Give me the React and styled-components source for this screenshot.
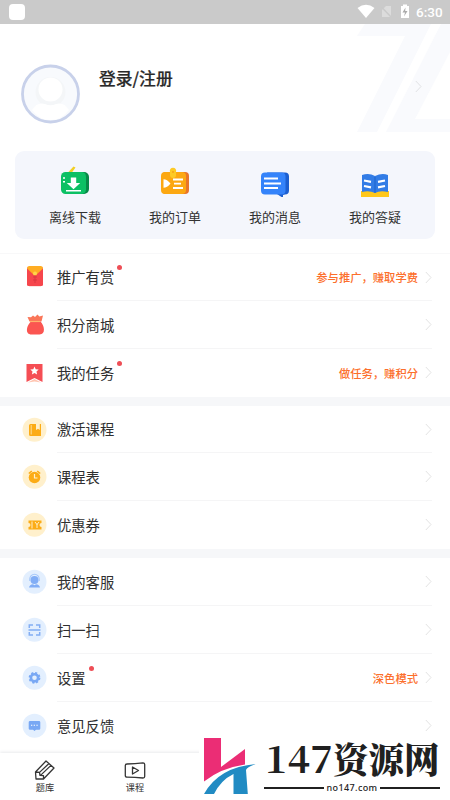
import React from "react";
import styled, { createGlobalStyle } from "styled-components";

const Global = createGlobalStyle`
  * { box-sizing: border-box; }
  body { margin: 0; background: #fff; font-family: "Noto Sans CJK SC", sans-serif; color: #333; }
`;
const Screen = styled.div`
  position: relative; width: 450px; height: 800px; overflow: hidden;
  display: flex; flex-direction: column; background: #fff;
`;
const StatusBar = styled.header`
  height: 24px; flex: none; background: #cacaca; display: flex; align-items: center;
  justify-content: space-between; padding: 0 7px 0 9px;
`;
const AppBadge = styled.div`width: 16px; height: 16px; border-radius: 4px; background: #fff;`;
const StatusIcons = styled.div`display: flex; align-items: center;`;
const Clock = styled.span`
  font: 500 13.5px/24px Roboto, sans-serif; color: #fff; margin-left: 7px; width: 27px; white-space: nowrap;
`;
const Profile = styled.section`
  position: relative; height: 127px; flex: none; display: flex; padding: 40px 21px 0;
`;
const Emblem = styled.svg`position: absolute; right: 0; top: 0;`;
const Avatar = styled.svg`flex: none;`;
const Login = styled.h1`
  margin: 1px 0 0 19px; font-size: 16.8px; line-height: 26px; font-weight: 500; color: #2a2a2a; flex: 1;
  -webkit-text-stroke: .2px #2a2a2a;
`;
const ProfileArrow = styled.div`position: relative; margin: 16px 7px 0 0; line-height: 0;`;
const Card = styled.section`
  height: 88px; flex: none; margin: 0 15px 14px; padding: 0 10px; background: #f4f6fc; border-radius: 9px;
  display: grid; grid-template-columns: repeat(4, 100px);
`;
const Shortcut = styled.div`
  display: flex; flex-direction: column; align-items: center; padding-top: 14px;
  font-size: 13px; line-height: 20px; color: #333;
  svg { margin-bottom: 10px; }
`;
const Group = styled.section`
  flex: none; border-bottom: ${(p) => (p.$last ? "none" : "9px solid #f6f7f9")};
  border-top: ${(p) => (p.$first ? "1px solid #f8f8f9" : "none")};
`;
const Row = styled.div`
  height: ${(p) => (p.$short ? 47 : 48)}px; display: flex; align-items: center; padding-left: 22px;
`;
const IconSlot = styled.div`width: 35px; height: 26px; flex: none;`;
const RowBody = styled.div`
  height: 100%; flex: 1; margin-right: 18px; display: flex; align-items: center;
  border-bottom: 1px solid ${(p) => (p.$line ? "#f5f5f6" : "transparent")};
`;
const Label = styled.span`
  position: relative; font-size: 14.3px; line-height: 22px; color: #2f2f2f;
`;
const Dot = styled.i`
  position: absolute; left: calc(100% + 3px); top: -1px; width: 5px; height: 5px; border-radius: 50%; background: #ee4e56;
`;
const Hint = styled.span`
  margin-left: auto; font-size: 11.3px; line-height: 18px; font-weight: 500; color: #fc6f2c;
`;
const ArrowSlot = styled.span`
  display: flex; margin-left: ${(p) => (p.$after ? "7px" : "auto")};
`;
const TabBar = styled.nav`
  position: absolute; left: 0; right: 0; bottom: 0; height: 47px; background: #fff;
  box-shadow: 0 -1px 3px #e9eaec; display: grid; grid-template-columns: repeat(5, 90px);
`;
const Tab = styled.div`
  display: flex; flex-direction: column; align-items: center; padding-top: 7px;
  font-size: 9.2px; line-height: 12px; color: #333;
  svg { margin-bottom: 1px; }
`;
const Watermark = styled.aside`
  position: absolute; left: 199px; bottom: 0; width: 251px; height: 67px; background: #fff;
  display: flex; padding: 4px 0 0 5px;
`;
const Brand = styled.div`margin-left: 8px; width: 176px;`;
const BrandName = styled.div`
  height: 46px; display: flex; align-items: flex-start; color: #202020; white-space: nowrap;
`;
const Digits = styled.span`
  font: 700 38px/40px "Noto Serif CJK SC", "Liberation Serif", serif; letter-spacing: .3px; width: 68px; margin-left: 1px;
`;
const Hanzi = styled.span`
  font: 900 35.5px/42px "Noto Serif CJK SC", "Noto Sans CJK SC", serif;
`;
const Domain = styled.div`
  display: flex; align-items: center; gap: 2px; color: #222; font: 500 9px/10px "Noto Sans", sans-serif;
  letter-spacing: .4px;
  &::before, &::after { content: ""; height: 2px; background: #202020; flex: 1; }
`;

const Chevron = ({ color = "#e2e2e2" }) => (
  <svg width="7" height="13" viewBox="0 0 7 13" fill="none" stroke={color} strokeWidth="1"><path d="M.8 1 6 6.5.8 12" /></svg>
);

const CardIcon = ({ name }) => (
  <svg width="32" height="32" viewBox="0 0 32 32">
    {name === "download" && <>
      <path d="m8.500 8 6-6.500 2 1-4 5.500Z" fill="#f2cf24" />
      <rect x="5" y="7" width="25" height="22" rx="5" fill="#078947" />
      <rect x="2" y="7" width="25" height="22" rx="4.5" fill="#0cc064" />
      <path d="M11.800 12.500h5.400V18h4L14.500 24.200 7.800 18h4Z" fill="#fff" />
      <path d="M7 25.700h15M4 13h2M4 16.800h2" stroke="#fff" strokeWidth="1.500" />
    </>}
    {name === "order" && <>
      <rect x="3" y="7" width="27" height="22" rx="4" fill="#e97528" />
      <rect x="2" y="7" width="25" height="22" rx="4" fill="#fca812" />
      <path d="M11 7a3.200 3.200 0 1 1 6 0v3a3 3 0 0 1-6 0Z" fill="#fdca25" /><circle cx="14" cy="7" r="1" fill="#f6a416" />
      <path d="M4.500 14.200q3.500 0 7 4.300-3.500 4.300-7 4.300Z" fill="#fff" />
      <path d="M14 14.500h10M15 18.700h7M14 23h10" stroke="#fff" strokeWidth="1.800" />
    </>}
    {name === "message" && <>
      <path d="M8 7.500h18a4 4 0 0 1 4 4v14a4 4 0 0 1-4 4l-2 .500v3L18 29Z" fill="#1c5fd0" />
      <path d="M6 7.500h16.500a4 4 0 0 1 4 4V25.500a4 4 0 0 1-4 4H6a4 4 0 0 1-4-4V11.500a4 4 0 0 1 4-4Z" fill="#3483fa" />
      <path d="M5 13.500h14M5 18.500h17M5 23h14" stroke="#fff" strokeWidth="2.200" />
    </>}
    {name === "book" && <>
      <path d="M2 26h28v6H20q-4 0-5 1h-1q-2-1-5-1H2Z" fill="#ffc719" />
      <path d="M3 10q7-2.500 13 1 7-3.500 13-1v17q-8-2-13 1-6-3-13-1Z" fill="#327ce6" />
      <path d="m5 15.500 7 1.300M5 21l7 1.300M19 16.800l7-1.300M19 22.300l7-1.300" stroke="#fff" strokeWidth="2.200" />
      <path d="M16 12v16" stroke="#1b62cb" strokeWidth="1" />
    </>}
  </svg>
);

const Disc = ({ blue, children }) => (
  <svg width="26" height="26" viewBox="0 0 26 26">
    <circle cx="12.500" cy="12.800" r="12" fill={blue ? "#e3effe" : "#fff0cc"} />
    {children}
  </svg>
);

const RowIcon = ({ name }) => {
  switch (name) {
    case "reward": return <svg width="26" height="26" viewBox="0 1 26 26"><rect x="5" y="3" width="16" height="19" rx="1.500" fill="#f6464c" /><path d="M5 4.500Q5 2 7 2h12q2 0 2 2.500L13 12Z" fill="#ffad23" /><circle cx="13" cy="9.500" r="2" fill="#ffd44b" /><path d="M11 13h4M13 11v8M11 16h4" stroke="#d93640" /><path d="M7 22.500h12" stroke="#fde3e0" /></svg>;
    case "mall": return <svg width="26" height="26" viewBox="0 -.5 26 26"><path d="M7.500 9 5.500 4.500 9 4.800 11 3l2 1.500L15.500 2l1.800 2L21 3l-1.500 6Z" fill="#fa7658" /><path d="M9 9h9.500c4 4 5.500 13-1 13H9.500c-7 0-5-9-.500-13Z" fill="#fb5551" /><path d="M8 9h10" stroke="#ffb36c" strokeWidth="1.200" /></svg>;
    case "task": return <svg width="26" height="26" viewBox="0 -1 26 26"><path d="M4.500 3h16v18l-8-4-8 4Z" fill="#f54e54" /><path d="m6 21.500 6.500-3.500 6.500 3.500-6.500-1Z" fill="#ffc5b1" /><path d="m12.500 5.500 1.200 2.700 3 .3-2.200 2 .6 3-2.600-1.500-2.600 1.500.6-3-2.200-2 3-.3Z" fill="#fff" /></svg>;
    case "activate": return <Disc><path d="M8.500 7H14v6l2-1.200 1.800 1.200V7H19v12H8.500Q7 19 7 17.500v-9Q7 7 8.500 7Z" fill="#fcac16" /><path d="M9.200 8v9.500" stroke="#fff0cc" strokeWidth=".7" /></Disc>;
    case "schedule": return <Disc><circle cx="12.500" cy="13.500" r="5.800" fill="#fcac16" /><path d="m6.800 9.500 3-2.500M18.200 9.500l-3-2.500" stroke="#fcac16" strokeWidth="1.600" /><path d="M12.500 10v4h3" fill="none" stroke="#fff0cc" strokeWidth="1.200" /></Disc>;
    case "coupon": return <Disc><path d="M6.500 8.500h13V11a2 2 0 0 0 0 4v2.500h-13V15a2 2 0 0 0 0-4Z" fill="#fcac16" /><path d="M10 9.500v7M13 10l2 2.500 2-2.500M15 12v4" fill="none" stroke="#fff0cc" strokeWidth="1" /></Disc>;
    case "service": return <Disc blue><circle cx="12.500" cy="11" r="4" fill="#82aef6" /><path d="M7.800 12v-2a4.700 4.700 0 0 1 9.400 0v2" fill="none" stroke="#a5c7fa" strokeWidth="1.100" /><path d="M7 18.500q.5-3 4-3.200l1.500 1 1.500-1q3.500.2 4 3.200Z" fill="#82aef6" /></Disc>;
    case "scan": return <Disc blue><path d="M11 8H7.300v3M14 8h3.700v3M7.300 15v3H11M14 18h3.700v-3M6.500 13h12" fill="none" stroke="#83aef4" strokeWidth="1.500" /></Disc>;
    case "settings": return <Disc blue><circle cx="12.500" cy="12.800" r="3.600" fill="none" stroke="#79a8f4" strokeWidth="2.600" /><circle cx="12.500" cy="12.800" r="5" fill="none" stroke="#79a8f4" strokeWidth="1.800" strokeDasharray="2.100 1.830" /></Disc>;
    default: return <Disc blue><path d="M8 8h9q1.300 0 1.300 1.300v6.200q0 1.300-1.300 1.300h-3L12.500 18 11 16.800H8q-1.300 0-1.300-1.300V9.300Q6.700 8 8 8Z" fill="#79a8f4" /><path d="M9 12.300h1.300m1.400 0H13m1.400 0h1.300" stroke="#fff" strokeWidth="1.100" /></Disc>;
  }
};

const shortcuts = [["download", "离线下载"], ["order", "我的订单"], ["message", "我的消息"], ["book", "我的答疑"]];
const groups = [
  [{ icon: "reward", label: "推广有赏", dot: true, hint: "参与推广，赚取学费" }, { icon: "mall", label: "积分商城" }, { icon: "task", label: "我的任务", dot: true, hint: "做任务，赚积分" }],
  [{ icon: "activate", label: "激活课程" }, { icon: "schedule", label: "课程表" }, { icon: "coupon", label: "优惠券" }],
  [{ icon: "service", label: "我的客服" }, { icon: "scan", label: "扫一扫" }, { icon: "settings", label: "设置", dot: true, hint: "深色模式" }, { icon: "feedback", label: "意见反馈" }],
];

export default function App() {
  return (
    <Screen>
      <Global />
      <StatusBar>
        <AppBadge />
        <StatusIcons>
          <svg width="58" height="24" viewBox="0 0 58 24">
            <path d="M0 8Q8.500 1.500 17 8L8.500 18Z" transform="translate(6.500 0)" fill="#fff" />
            <path d="M31 10l4-4h5v11h-9Z" fill="#dcdcdc" /><path d="m29.500 6 12 12.500" stroke="#cacaca" strokeWidth="1.500" />
            <path d="M50 6h2V4.500h4V6h2v12h-8Z" fill="#fff" />
            <path d="m54.500 7.500-3 5H54L53 16.500l3.500-5.500h-2.300Z" fill="#aaa" />
          </svg>
          <Clock>6:30</Clock>
        </StatusIcons>
      </StatusBar>
      <Profile>
        <Emblem width="93" height="110" viewBox="0 0 93 110" fill="#f9fafd">
          <path d="M8 0h66L20 108H0L48 12H0Z" /><path d="M84 0h9v28L58 95h35v13H29Z" />
        </Emblem>
        <Avatar width="59" height="60" viewBox="0 0 59 60">
          <circle cx="29.500" cy="30" r="28" fill="#f8fafd" stroke="#c8d1ea" strokeWidth="2.800" />
          <circle cx="29.500" cy="28" r="15" fill="#f4f6f8" />
          <circle cx="29.500" cy="25.500" r="12" fill="#fff" />
          <path d="M11 46q5-8 13-6 5.500 2.500 11 0 8-2 13 6-7 10-18.500 10T11 46Z" fill="#fff" />
        </Avatar>
        <Login>登录/注册</Login>
        <ProfileArrow><Chevron color="#e0e1e4" /></ProfileArrow>
      </Profile>
      <Card>{shortcuts.map(([icon, label]) => <Shortcut key={icon}><CardIcon name={icon} />{label}</Shortcut>)}</Card>
      {groups.map((rows, g) => (
        <Group key={g} $first={g === 0} $last={g === 2}>
          {rows.map((r, i) => (
            <Row key={r.icon} $short={i === 0 && g < 2}>
              <IconSlot><RowIcon name={r.icon} /></IconSlot>
              <RowBody $line={i < rows.length - 1}>
                <Label>{r.label}{r.dot && <Dot />}</Label>
                {r.hint && <Hint>{r.hint}</Hint>}
                <ArrowSlot $after={!!r.hint}><Chevron /></ArrowSlot>
              </RowBody>
            </Row>
          ))}
        </Group>
      ))}
      <TabBar>
        <Tab>
          <svg width="22" height="20" viewBox="0 0 22 20" fill="none" stroke="#353535" strokeWidth="1.300" strokeLinejoin="round"><path d="M1.500 12 12 1l8 7L9.500 19H2Zm0 0 4 .4.500 3 3.500.300v3.300M5.500 12.400 15 3.500M6.500 15.400l10.500-10" /></svg>
          题库
        </Tab>
        <Tab>
          <svg width="22" height="20" viewBox="0 0 22 20" fill="none" stroke="#353535" strokeWidth="1.300" strokeLinejoin="round"><path d="M3 4q8-.1 16-1.200 1.700 0 1.700 1.700v12q0 1.500-1.700 1.500Q11 17.200 3 17.200q-1.700 0-1.700-1.700v-10Q1.300 4 3 4ZM8.500 7v7l6-3.500Z" /></svg>
          课程
        </Tab>
      </TabBar>
      <Watermark>
        <svg width="52" height="60" viewBox="0 0 52 60">
          <path d="M0 1h17v29L41 12v15.500Q17 31 0 44.500Z" fill="#eb2d75" />
          <path d="M0 57Q15 30 52 27 43 30 42 33l1.800 24H29.500V37Q17 43 10 57Z" fill="#218bc3" />
        </svg>
        <Brand>
          <BrandName><Digits>147</Digits><Hanzi>资源网</Hanzi></BrandName>
          <Domain>no147.com</Domain>
        </Brand>
      </Watermark>
    </Screen>
  );
}
